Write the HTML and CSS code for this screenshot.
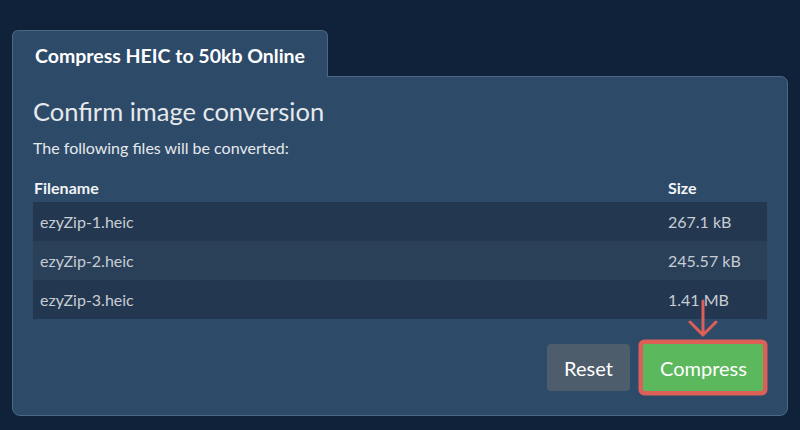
FILE: index.html
```html
<!DOCTYPE html>
<html lang="en">
<head>
<meta charset="utf-8">
<title>Compress HEIC to 50kb Online</title>
<link rel="stylesheet" href="styles.css">
</head>
<body>
<div class="wrap">
  <div class="tab">Compress HEIC to 50kb Online</div>
  <div class="card">
    <h2 class="title">Confirm image conversion</h2>
    <p class="lead">The following files will be converted:</p>
    <table class="files">
      <thead>
        <tr><th class="name-h">Filename</th><th class="size-col">Size</th></tr>
      </thead>
      <tbody>
        <tr><td>ezyZip-1.heic</td><td class="size-col">267.1 kB</td></tr>
        <tr><td>ezyZip-2.heic</td><td class="size-col">245.57 kB</td></tr>
        <tr><td>ezyZip-3.heic</td><td class="size-col">1.41 MB</td></tr>
      </tbody>
    </table>
    <div class="actions">
      <button class="btn btn-reset">Reset</button>
      <div class="highlight">
        <svg class="arrow" width="30" height="40" viewBox="0 0 30 40" aria-hidden="true">
          <path d="M15 2 V36 M2 23 L15 36 L28 23" fill="none" stroke="#dc5f58" stroke-width="3" stroke-linecap="round" stroke-linejoin="round"/>
        </svg>
        <button class="btn btn-compress">Compress</button>
      </div>
    </div>
  </div>
</div>
</body>
</html>
```

FILE: styles.css
```css
* { box-sizing: border-box; }
html, body { margin: 0; padding: 0; }
body {
  background: #10213a;
  font-family: Lato, "Open Sans", "Liberation Sans", sans-serif;
  color: #e8ebee;
  width: 800px;
  height: 430px;
  overflow: hidden;
}
.wrap {
  padding: 30px 12px 0 12px;
}
.tab {
  display: inline-block;
  position: relative;
  z-index: 1;
  width: 316px;
  height: 47px;
  margin-bottom: -1px;
  padding: 12.5px 0 0 22px;
  background: #2d4a69;
  border: 1px solid #4a6785;
  border-bottom: none;
  border-radius: 6px 6px 0 0;
  font-weight: 700;
  font-size: 19.5px;
  line-height: 24px;
  color: #ffffff;
}
.card {
  background: #2d4a69;
  border: 1px solid #4a6785;
  border-radius: 0 7px 8px 8px;
  padding: 19px 20px 24px 20px;
}
.title {
  margin: 0;
  font-weight: 400;
  font-size: 25.5px;
  line-height: 31px;
  color: #e6e9ec;
}
.lead {
  margin: 11px 0 0 0;
  font-size: 16px;
  line-height: 19px;
  color: #e6e9ec;
}
.files {
  width: 100%;
  border-collapse: collapse;
  margin-top: 19px;
  font-size: 16px;
}
.files th {
  text-align: left;
  font-weight: 700;
  line-height: 24px;
  padding: 0 7px 2px 7px;
  color: #f2f4f6;
}
.files th.name-h { padding-left: 1px; }
.files td {
  line-height: 24px;
  padding: 7.5px 7px;
  color: #c6cdd4;
}
.files tbody tr:nth-child(odd) { background: #243750; }
.files tbody tr:nth-child(even) { background: #2a4059; }
.size-col { width: 106px; }
.actions {
  display: flex;
  justify-content: flex-end;
  gap: 13px;
  margin-top: 25px;
  padding-right: 4px;
}
.highlight {
  position: relative;
}
.arrow {
  position: absolute;
  left: 50%;
  bottom: 100%;
  margin-left: -15px;
  margin-bottom: 5px;
}
.btn {
  font-family: Lato, "Open Sans", "Liberation Sans", sans-serif;
  font-size: 20px;
  line-height: 24px;
  height: 47px;
  border: none;
  border-radius: 4px;
  color: #ffffff;
  padding: 0 17px;
  cursor: pointer;
}
.btn-reset {
  width: 83px;
  background: #4e5d6c;
}
.btn-compress {
  display: block;
  width: 120px;
  background: #5cb85c;
  border-radius: 2px;
  box-shadow: 0 0 0 4.5px #dc5f58;
}
```
